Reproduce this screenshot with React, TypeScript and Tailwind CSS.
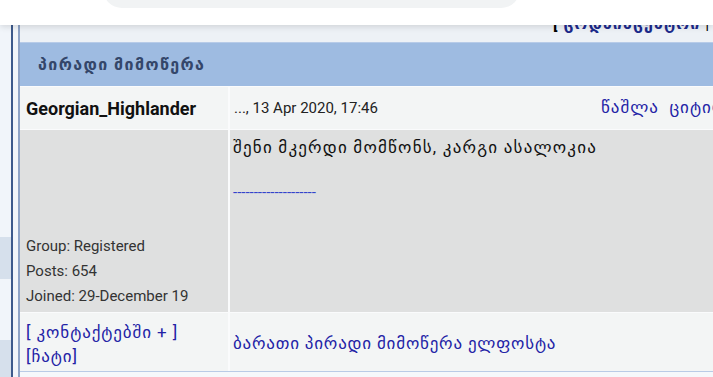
export default function App() {
  const font = { fontFamily: "Roboto, 'DejaVu Sans', 'Noto Sans', sans-serif" };
  return (
    <div className="relative w-[713px] h-[377px] overflow-hidden bg-[#eef3f9] flex" style={font}>
      {/* left strip */}
      <div className="w-[11px] shrink-0 flex flex-col bg-[#f1f5fa]">
        <div className="h-[237px]" />
        <div className="h-[42px] bg-[#d6e0ec]" />
        <div className="h-[61px]" />
        <div className="flex-1 bg-[#d6e0ec]" />
      </div>
      <div className="w-[2px] shrink-0 bg-[#3d5a8c]" />
      <div className="w-[5px] shrink-0 bg-[#f1f5fa]" />
      {/* main */}
      <div className="w-[780px] shrink-0 border-l-2 border-[#8ea3c6] flex flex-col bg-[#f5f8fb]">
        <div className="h-[42px] shrink-0 bg-[#edf1f6] flex">
          <div className="pl-[533px] pt-[14px] text-[16px] leading-[20px] font-bold whitespace-nowrap text-[#1c2a8c] tracking-[1px]">
            <span className="text-black">[</span> ცოდნისცენტრი <span className="text-black font-normal">|</span> საიტის წესები
          </div>
        </div>
        <div className="flex flex-col gap-y-[1px] bg-[#fafbfc] border-b border-[#b9cbe6]">
          <div className="h-[44px] bg-[#9ebbe1] border-t border-[#b7cbe8] flex items-center pl-[18px]">
            <span className="text-[16px] font-bold text-[#34466a] tracking-[1.4px]">პირადი მიმოწერა</span>
          </div>
          {/* row 1 */}
          <div className="flex gap-x-[2px] h-[42px]">
            <div className="w-[208px] shrink-0 bg-[#f3f5f5] flex items-center pl-[6px]">
              <span className="text-[18px] font-bold text-[#111]">Georgian_Highlander</span>
            </div>
            <div className="flex-1 bg-[#f3f5f5] flex items-center pl-[4px]">
              <span className="w-[367px] shrink-0 text-[15px] text-[#222] whitespace-nowrap">..., 13 Apr 2020, 17:46</span>
              <span className="text-[17px] text-[#2323a6] whitespace-nowrap tracking-[1px]">წაშლა&nbsp; ციტირება</span>
            </div>
          </div>
          {/* row 2 */}
          <div className="flex gap-x-[2px] h-[182px]">
            <div className="w-[208px] shrink-0 bg-[#dfe0e0] flex flex-col justify-end pl-[6px] pb-[3px] text-[15px] leading-[25px] text-[#333]">
              <div>Group: Registered</div>
              <div>Posts: 654</div>
              <div>Joined: 29-December 19</div>
            </div>
            <div className="flex-1 bg-[#dfe0e0] pl-[3px] pt-[6px]">
              <div className="text-[17px] leading-[22px] text-[#111] whitespace-nowrap tracking-[1.2px]">შენი მკერდი მომწონს, კარგი ასალოკია</div>
              <div className="mt-[27px] text-[15px] leading-[14px] text-[#3344cc]">--------------------</div>
            </div>
          </div>
          {/* row 3 */}
          <div className="flex gap-x-[2px] h-[58px]">
            <div className="w-[208px] shrink-0 bg-[#f3f5f5] flex flex-col justify-center pl-[6px] pt-[4px] text-[17px] leading-[24px] text-[#2323a6] tracking-[0.9px]">
              <div>[ კონტაქტებში + ]</div>
              <div>[ჩატი]</div>
            </div>
            <div className="flex-1 bg-[#f3f5f5] flex items-center pl-[3px] pt-[4px]">
              <span className="text-[17px] text-[#2323a6] whitespace-nowrap tracking-[0.8px]">ბარათი პირადი მიმოწერა ელფოსტა</span>
            </div>
          </div>
        </div>
      </div>
      {/* browser top bar overlay */}
      <div className="absolute left-0 top-0 w-full h-[25px] bg-white shadow-[0_2px_6px_rgba(0,0,0,0.12)]">
        <div className="absolute left-[103px] top-[-30px] w-[417px] h-[38px] rounded-[20px] bg-[#f1f3f4]" />
      </div>
    </div>
  );
}
